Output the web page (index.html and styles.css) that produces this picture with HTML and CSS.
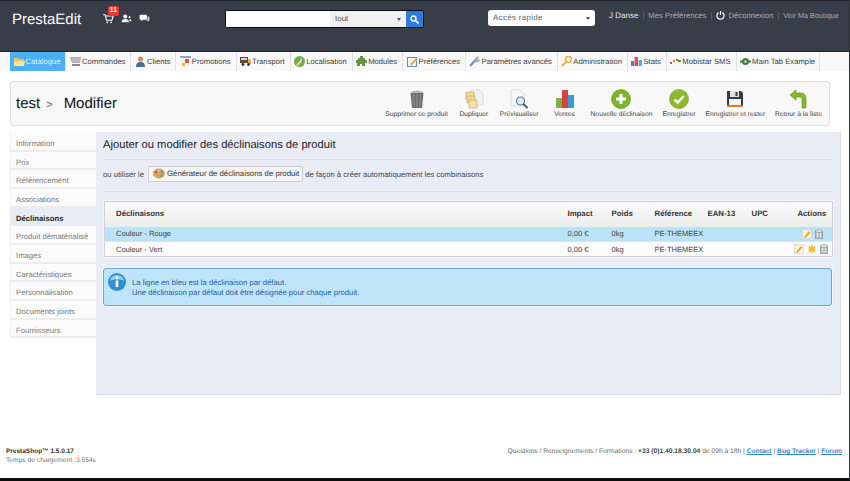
FILE: index.html
```html
<!DOCTYPE html>
<html lang="fr">
<head>
<meta charset="utf-8">
<title>PrestaEdit</title>
<link rel="stylesheet" href="styles.css">
</head>
<body>
<div class="page">
  <header class="top">
    <div class="logo">PrestaEdit</div>
    <div class="notifs">
      <span class="notif">
        <svg width="11" height="11" viewBox="0 0 13 13"><path d="M0 2h2.500l1.600 6.500h6.400l1.600-5H3" fill="none" stroke="#fff" stroke-width="1.200"/><circle cx="5" cy="11" r="1.100" fill="#fff"/><circle cx="9.600" cy="11" r="1.100" fill="#fff"/></svg>
        <b class="badge">11</b>
      </span>
      <svg class="notif" width="11" height="9" viewBox="0 0 12 11"><circle cx="4.500" cy="3" r="2.400" fill="#fff"/><path d="M0 10c0-3 2-4 4.500-4s4.500 1 4.500 4z" fill="#fff"/><circle cx="9.700" cy="4" r="1.300" fill="#fff"/><path d="M9.500 6.500c1.500 0 2.500.7 2.500 2.500h-2z" fill="#fff"/></svg>
      <svg class="notif" width="11" height="9" viewBox="0 0 12 11"><rect x="0" y="1" width="9" height="6" rx="1.500" fill="#fff"/><path d="M2 6v3l3-2.500z" fill="#fff"/><path d="M10 3h1a1 1 0 0 1 1 1v3a1 1 0 0 1-1 1v1.500L9.500 8H7l3-1.500z" fill="#dfe2e6"/></svg>
    </div>
    <form class="search">
      <span class="search-input"></span>
      <span class="search-select">tout<i class="caret"></i></span>
      <span class="search-btn"><svg width="9" height="9" viewBox="0 0 9 9"><circle cx="3.500" cy="3.500" r="2.500" fill="none" stroke="#fff" stroke-width="1.400"/><path d="M5.500 5.500L8.500 8.500" stroke="#fff" stroke-width="1.600"/></svg></span>
    </form>
    <div class="quick">Accès rapide<i class="caret"></i></div>
    <nav class="user">
      <span class="user-name">J Danse</span>
      <span class="user-sep"></span>
      <a>Mes Préférences</a>
      <span class="user-sep"></span>
      <svg width="9" height="9" viewBox="0 0 9 9"><path d="M2.600 1.600a3.600 3.600 0 1 0 3.800 0" fill="none" stroke="#fff" stroke-width="1.200"/><path d="M4.500 0v4" stroke="#fff" stroke-width="1.200"/></svg>
      <a>Déconnexion</a>
      <span class="user-sep"></span>
      <a class="user-shop">Voir Ma Boutique</a>
    </nav>
  </header>

  <nav class="tabs">
    <a class="tab tab-on"><svg class="ti" viewBox="0 0 11 11"><path d="M0 2h4l1 1h5v7H0z" fill="#e8c65a"/><path d="M0 5h11l-1 5H0z" fill="#fbe58e"/></svg>Catalogue</a>
    <a class="tab"><svg class="ti" viewBox="0 0 11 11"><path d="M0 1h11l-1 6H2z" fill="#a9a9a9"/><path d="M2 3h8M2 5h8" stroke="#dedede" stroke-width=".7"/><rect x="2" y="8" width="8" height="2" fill="#888"/></svg>Commandes</a>
    <a class="tab"><svg class="ti" viewBox="0 0 11 11"><circle cx="5.500" cy="3" r="2.600" fill="#c98d5e"/><path d="M1 11c0-4 2-5 4.500-5s4.500 1 4.500 5z" fill="#41709f"/></svg>Clients</a>
    <a class="tab"><svg class="ti" viewBox="0 0 11 11"><rect x="0" y="0" width="11" height="2" fill="#88a7cb"/><rect x="1" y="2" width="9" height="9" fill="#f4f1e6"/><rect x="5" y="3" width="4" height="4" fill="#e7583f"/><rect x="2" y="7" width="3" height="3" fill="#f0b847"/></svg>Promotions</a>
    <a class="tab"><svg class="ti" viewBox="0 0 11 11"><rect x="0" y="1" width="8" height="6" fill="#5a4a3a"/><path d="M8 3h2l1 2v3H8z" fill="#f0a83a"/><rect x="1" y="2" width="6" height="2" fill="#cfd9e4"/><circle cx="3" cy="8.500" r="1.400" fill="#333"/><circle cx="8.500" cy="8.500" r="1.400" fill="#333"/></svg>Transport</a>
    <a class="tab"><svg class="ti" viewBox="0 0 11 11"><circle cx="5.500" cy="5.500" r="5.500" fill="#6fae4c"/><path d="M2 9l6-7 1.500 1.500L4 10z" fill="#f4d66a"/><path d="M8 2a4 4 0 0 1 2 3l-2 1z" fill="#4f95d8"/></svg>Localisation</a>
    <a class="tab"><svg class="ti" viewBox="0 0 11 11"><path d="M4 0h3v2h2v2h2v3H9v3H6V8H4v2H1V7H0V4h2V2h2z" fill="#5f9a3c"/></svg>Modules</a>
    <a class="tab"><svg class="ti" viewBox="0 0 11 11"><rect x=".5" y="1.500" width="9" height="9" fill="#eef4fb" stroke="#5d8fc9"/><path d="M3 8l6-6 1.500 1.500-6 6z" fill="#f0b23c"/></svg>Préférences</a>
    <a class="tab"><svg class="ti" viewBox="0 0 11 11"><path d="M1 10l5.500-6" stroke="#7296c4" stroke-width="2.400"/><path d="M6 4a3 3 0 0 1 4.500-3L8.500 3l.5 1 2-1a3 3 0 0 1-4 3z" fill="#a3a9b2"/></svg>Paramètres avancés</a>
    <a class="tab"><svg class="ti" viewBox="0 0 11 11"><circle cx="7.500" cy="3.500" r="3" fill="none" stroke="#e4b23c" stroke-width="1.600"/><path d="M5.500 5.500L1 10" stroke="#e4b23c" stroke-width="1.800"/></svg>Administration</a>
    <a class="tab"><svg class="ti" viewBox="0 0 11 11"><rect x="0" y="5" width="3" height="5" fill="#5b78c6"/><rect x="3.500" y="1" width="3.500" height="9" fill="#d9544f"/><rect x="7.500" y="4" width="3.500" height="6" fill="#5da9e0"/></svg>Stats</a>
    <a class="tab"><svg class="ti" viewBox="0 0 11 11"><path d="M0 6h2v2H0z" fill="#e8368f"/><path d="M3 4h2v2H3z" fill="#ef7d22"/><path d="M6 3h2v2H6z" fill="#e8432f"/><path d="M8 4h3v2H8z" fill="#46a04a"/></svg>Mobistar SMS</a>
    <a class="tab tab-last"><svg class="ti" viewBox="0 0 11 11"><circle cx="5.500" cy="5.500" r="3.500" fill="#3f7f3c"/><path d="M0 5.500h11" stroke="#3f7f3c" stroke-width="2"/><circle cx="5.500" cy="5.500" r="1.200" fill="#e8f0e0"/></svg>Main Tab Example</a>
  </nav>

  <section class="toolbar">
    <h1 class="crumb">test<span class="crumb-sep">&gt;</span>Modifier</h1>
    <div class="actions">
      <a class="act">
        <svg class="ai" viewBox="0 0 20 20"><path d="M3.500 4h13L15 19H5z" fill="#6f7073"/><path d="M6.500 5l.8 13M10 5v13M13.500 5l-.8 13" stroke="#999" stroke-width=".8"/><path d="M3.500 4c1-3.500 12-3.500 13 0z" fill="#b5b5b5"/></svg>
        <span>Supprimer ce produit</span>
      </a>
      <a class="act">
        <svg class="ai" viewBox="0 0 20 20"><path d="M7 1h8l4 4v11H7z" fill="#f2f2f2" stroke="#ccc" stroke-width=".6"/><rect x="2" y="3" width="8" height="7" fill="#edd79a" stroke="#c6a65a" stroke-width=".6"/><rect x="3" y="7" width="8" height="7" fill="#edd79a" stroke="#c6a65a" stroke-width=".6"/><rect x="5" y="11" width="8" height="8" fill="#f2dfa6" stroke="#c6a65a" stroke-width=".6"/></svg>
        <span>Dupliquer</span>
      </a>
      <a class="act">
        <svg class="ai" viewBox="0 0 20 20"><path d="M2 1h9l4 4v12H2z" fill="#f6f8fb" stroke="#ccd3dc" stroke-width=".7"/><circle cx="11.500" cy="12" r="4" fill="#dbe9f6" stroke="#5b7da3" stroke-width="1.200"/><path d="M14.500 15l4 4" stroke="#44586f" stroke-width="1.800"/></svg>
        <span>Prévisualiser</span>
      </a>
      <a class="act">
        <svg class="ai" viewBox="0 0 20 20"><rect x="1" y="9" width="6" height="10" fill="#7cb342"/><rect x="7" y="1" width="6" height="18" fill="#d9433b"/><rect x="13" y="6" width="6" height="13" fill="#3f9bd8"/></svg>
        <span>Ventes</span>
      </a>
      <a class="act">
        <svg class="ai" viewBox="0 0 20 20"><circle cx="10" cy="10" r="9.500" fill="#7ab52d" stroke="#5d9120" stroke-width=".6"/><path d="M10 5v10M5 10h10" stroke="#fff" stroke-width="3"/></svg>
        <span>Nouvelle déclinaison</span>
      </a>
      <a class="act">
        <svg class="ai" viewBox="0 0 20 20"><circle cx="10" cy="10" r="9.500" fill="#8cbc2c" stroke="#6f9a20" stroke-width=".6"/><path d="M5.500 10.500l3.200 3 6-6.500" fill="none" stroke="#fff" stroke-width="2.400"/></svg>
        <span>Enregistrer</span>
      </a>
      <a class="act">
        <svg class="ai" viewBox="0 0 20 20"><path d="M2 2h14l2 2v14H2z" fill="#333b45"/><rect x="5" y="2" width="9" height="6" fill="#dfe3e8"/><rect x="10.500" y="3" width="2" height="4" fill="#333b45"/><rect x="4" y="10" width="12" height="6" fill="#f4f4f4"/><rect x="2" y="16" width="16" height="2" fill="#e8772a"/></svg>
        <span>Enregistrer et rester</span>
      </a>
      <a class="act">
        <svg class="ai" viewBox="0 0 20 20"><path d="M1 6l6-5v3h5a5 5 0 0 1 5 5v10h-4V10a2 2 0 0 0-2-2H7v3z" fill="#86b92d" stroke="#5f8a1c" stroke-width=".6"/></svg>
        <span>Retour à la liste</span>
      </a>
    </div>
  </section>

  <main class="main">
    <ul class="side">
      <li>Information</li>
      <li>Prix</li>
      <li>Référencement</li>
      <li>Associations</li>
      <li class="side-on">Déclinaisons</li>
      <li>Produit dématérialisé</li>
      <li>Images</li>
      <li>Caractéristiques</li>
      <li>Personnalisation</li>
      <li>Documents joints</li>
      <li>Fournisseurs</li>
    </ul>
    <div class="panel">
      <h2 class="panel-title">Ajouter ou modifier des déclinaisons de produit</h2>
      <div class="gen">
        <span>ou utiliser le</span>
        <a class="gen-btn">
          <svg width="12" height="11" viewBox="0 0 12 11"><ellipse cx="6" cy="5.500" rx="6" ry="5" fill="#d9a565"/><circle cx="3" cy="4" r="1.200" fill="#d9503c"/><circle cx="6" cy="2.600" r="1.100" fill="#f1d04a"/><circle cx="9" cy="4" r="1.200" fill="#4e95d8"/><circle cx="8.500" cy="7.500" r="1.200" fill="#5fae48"/></svg>
          Générateur de déclinaisons de produit
        </a>
        <span>de façon à créer automatiquement les combinaisons</span>
      </div>
      <table class="grid">
        <colgroup>
          <col class="c-name"><col class="c-imp"><col class="c-poi"><col class="c-ref"><col class="c-ean"><col class="c-upc"><col class="c-act">
        </colgroup>
        <thead>
          <tr><th class="first">Déclinaisons</th><th>Impact</th><th>Poids</th><th>Référence</th><th>EAN-13</th><th>UPC</th><th class="right">Actions</th></tr>
        </thead>
        <tbody>
          <tr class="row-def">
            <td class="first">Couleur - Rouge</td><td>0,00 €</td><td>0kg</td><td>PE-THEMEEX</td><td></td><td></td>
            <td class="row-acts row-acts-short">
              <svg class="ri" viewBox="0 0 10 10"><rect x=".5" y=".5" width="9" height="9" fill="#f7f2df" stroke="#d5d0c0" stroke-width=".6"/><path d="M2 8l5-6 1.500 1.500-5 5.500z" fill="#e9a92e"/></svg>
              <svg class="ri ri-bin" viewBox="1 0 8 10"><path d="M1.500 2h7v8h-7z" fill="#b9bdbd" stroke="#7f8585" stroke-width=".6"/><ellipse cx="5" cy="2" rx="3.600" ry="1.400" fill="#dfe2e2" stroke="#7f8585" stroke-width=".5"/><path d="M3.500 4v4.500M6.500 4v4.500" stroke="#eef0f0" stroke-width=".8"/></svg>
            </td>
          </tr>
          <tr>
            <td class="first">Couleur - Vert</td><td>0,00 €</td><td>0kg</td><td>PE-THEMEEX</td><td></td><td></td>
            <td class="row-acts">
              <svg class="ri" viewBox="0 0 10 10"><rect x=".5" y=".5" width="9" height="9" fill="#f7f2df" stroke="#d5d0c0" stroke-width=".6"/><path d="M2 8l5-6 1.500 1.500-5 5.500z" fill="#e9a92e"/></svg>
              <svg class="ri" viewBox="0 0 10 10"><path d="M5 0l1 3 3-1.500L7.500 4.500 10 5 7.500 6l1.500 3-3-1.500L5 10 4 7.500 1 9l1.500-3L0 5l2.500-.5L1 1.500 4 3z" fill="#f2bd2f"/></svg>
              <svg class="ri ri-bin" viewBox="1 0 8 10"><path d="M1.500 2h7v8h-7z" fill="#b9bdbd" stroke="#7f8585" stroke-width=".6"/><ellipse cx="5" cy="2" rx="3.600" ry="1.400" fill="#dfe2e2" stroke="#7f8585" stroke-width=".5"/><path d="M3.500 4v4.500M6.500 4v4.500" stroke="#eef0f0" stroke-width=".8"/></svg>
            </td>
          </tr>
        </tbody>
      </table>
      <div class="info">
        <svg width="18" height="18" viewBox="0 0 18 18"><circle cx="9" cy="9" r="9" fill="#2f8fd0"/><path d="M2 8a7 6 0 0 1 14 0c-3-2-11-2-14 0z" fill="#8cc9ee"/><circle cx="9" cy="5" r="1.400" fill="#fff"/><rect x="7.700" y="7.500" width="2.600" height="6.500" fill="#fff"/></svg>
        <p>La ligne en bleu est la déclinaison par défaut.<br>Une déclinaison par défaut doit être désignée pour chaque produit.</p>
      </div>
    </div>
  </main>

  <footer class="foot">
    <div class="foot-left">
      <strong>PrestaShop™ 1.5.0.17</strong>
      <span>Temps de chargement :3.554s</span>
    </div>
    <div class="foot-right">Questions / Renseignements / Formations : <strong>+33 (0)1.40.18.30.04</strong> de 09h à 18h | <a>Contact</a> | <a>Bug Tracker</a> | <a>Forum</a></div>
  </footer>
</div>
</body>
</html>
```

FILE: styles.css
```css
* { box-sizing: border-box; }
html, body { margin: 0; padding: 0; }
body { font-family: "Liberation Sans", Arial, sans-serif; font-size: 7.7px; color: #444; background: #fff; overflow: hidden; text-rendering: geometricPrecision; }
h1, h2, p, ul { margin: 0; padding: 0; }
ul { list-style: none; }

.page { width: 850px; height: 481px; display: flex; flex-direction: column; border-right: 1px solid #30343a; border-bottom: 3px solid #0c0c0c; background: #fff; }

/* top bar */
.top { height: 52px; flex: none; background: #383e48; border-top: 1px solid #23272d; border-bottom: 1px solid #23272d; display: flex; align-items: flex-start; position: relative; }
.logo { margin: 10px 0 0 12px; width: 91px; font-size: 15px; line-height: 18px; color: #fff; }
.notifs { display: flex; gap: 7px; margin-top: 12px; width: 122px; align-items: center; }
.notif { position: relative; display: block; }
.notif svg { display: block; }
.badge { position: absolute; left: 5px; top: -7px; width: 11px; height: 10px; background: #e8392e; border-radius: 2px; color: #fff; font-size: 7px; line-height: 10px; text-align: center; }
.search { display: flex; margin: 9px 0 0 0; width: 199px; height: 18px; border: 1px solid #0b0d10; border-radius: 2px; background: #fff; }
.search-input { width: 104px; background: #fff; }
.search-select { width: 76px; background: #f0f0f0; padding-left: 5px; font-size: 8px; line-height: 16px; color: #555; position: relative; }
.search-btn { width: 17px; background: #2a7ddb; display: flex; align-items: center; justify-content: center; }
.caret { position: absolute; right: 5px; top: 7px; width: 0; height: 0; border: 2.500px solid transparent; border-top: 3px solid #555; border-bottom: 0; }
.quick { position: relative; margin: 9px 0 0 64px; width: 107px; height: 16px; background: #fff; border-radius: 3px; padding-left: 5px; font-size: 8px; line-height: 16px; letter-spacing: .3px; color: #666; }
.user { position: absolute; left: 609px; top: 9px; display: flex; align-items: center; height: 10px; font-size: 7.700px; color: #a7abb1; white-space: nowrap; }
.user-name { color: #e6e8ea; font-size: 8px; }
.user-sep { width: 1px; height: 7px; background: #555b64; margin: 0 4.500px; }
.user-shop { font-size: 7.300px; }
.user svg { margin-right: 3px; }

/* tabs */
.tabs { height: 19px; flex: none; background: #f9f9f9; padding-left: 10px; display: flex; }
.tab { display: flex; align-items: center; gap: 1px; padding: 0 4.900px 0 3.500px; height: 19px; border-right: 1px solid #e3e3e3; color: #3c3c3c; white-space: nowrap; }
.tab-on { background: #4bb0f6; color: #dff1ff; }
.tab-last { padding-right: 4px; }
.ti { width: 11px; height: 11px; flex: none; }

/* toolbar */
.toolbar { flex: none; margin: 10px 0 0 10px; width: 820px; height: 45px; background: #f8f8f8; border: 1px solid #dedede; border-radius: 3px; display: flex; align-items: center; padding-left: 5px; padding-right: 2px; }
.crumb { font-size: 15px; font-weight: normal; color: #111; }
.crumb-sep { display: inline-block; margin: 0 11px 0 6px; font-size: 11px; color: #666; }
.actions { margin-left: auto; display: flex; }
.act { display: flex; flex-direction: column; align-items: center; min-width: 42px; padding: 0 5px; font-size: 6.750px; line-height: 9px; color: #444; white-space: nowrap; }
.ai { width: 20px; height: 20px; margin-bottom: 1px; }

/* main */
.main { flex: none; display: flex; margin: 6px 0 0 10px; width: 830px; height: 263px; }
.side { width: 86px; flex: none; padding-top: 1px; }
.side li { height: 18.670px; padding-left: 5px; line-height: 21px; color: #7a7a7a; background: #fbfbfb; border: 1px solid #ececf2; border-width: 0 0 2px 1px; }
.side .side-on { background: #e9ecf5; border-color: #e9ecf5; color: #20232a; font-weight: bold; }
.panel { flex: 1; background: #e9ecf5; border-right: 1px solid #dcdde2; border-bottom: 1px solid #dcdde2; padding: 7px 7px 0; }
.panel-title { font-size: 11.200px; line-height: 13px; font-weight: normal; color: #222; padding-bottom: 7px; border-bottom: 1px solid #dcdee6; }
.gen { display: flex; align-items: center; gap: 2px; padding: 6px 0 9px; border-bottom: 1px solid #dcdee6; color: #444; }
.gen-btn { display: flex; align-items: center; gap: 2px; margin: 0 0 0 2px; padding: 0 3px 1px 4px; height: 16px; background: #f5f5f5; border: 1px solid #cfcfcf; border-radius: 2px; color: #333; font-size: 7.800px; white-space: nowrap; }
.grid { margin: 9px 0 0 1px; width: 728px; table-layout: fixed; border-collapse: collapse; background: #fbfbfb; border: 1px solid #d0d2d6; box-shadow: 0 0 0 1px #f5f5f8; }
.c-name { width: 457px; } .c-imp { width: 44px; } .c-poi { width: 43px; } .c-ref { width: 53px; } .c-ean { width: 44px; } .c-upc { width: 45px; } .c-act { width: 42px; }
.grid th { height: 25px; padding: 0 0 2px 6px; text-align: left; font-size: 7.800px; color: #333; background: linear-gradient(#fafafa, #ececec); }
.grid td { height: 15px; padding: 0 0 0 6px; color: #444; font-size: 7.500px; white-space: nowrap; }
.grid .first { padding-left: 11px; }
.grid .right { text-align: right; padding-right: 6px; }
.grid tbody tr + tr td { border-top: 1px solid #e2e2e2; }
.row-def td { background: #bbe3f8; }
.grid .row-acts { padding: 0 4px 0 0; text-align: right; }
.grid .row-acts-short { padding-right: 9px; }
.ri { width: 10px; height: 10px; vertical-align: middle; margin-left: 1px; }
.ri-bin { width: 8px; }
.info { margin-top: 11px; width: 729px; height: 38px; display: flex; align-items: flex-start; gap: 6px; padding: 4px; background: #bde4f8; border: 1px solid #6fa3cb; border-radius: 3px; box-shadow: 0 0 0 1px #f6f8fc; }
.info p { margin-top: 5px; line-height: 10px; color: #1f5fa5; }

/* footer */
.foot { flex: 1; display: flex; justify-content: space-between; padding: 52px 7px 0 6px; }
.foot-left { display: flex; flex-direction: column; line-height: 9px; font-size: 6.700px; color: #777; }
.foot-left strong { color: #333; font-size: 6.500px; }
.foot-right { font-size: 6.700px; line-height: 9px; color: #666; }
.foot-right strong { color: #444; }
.foot-right a { color: #2c87c8; text-decoration: underline; font-weight: bold; }
```
